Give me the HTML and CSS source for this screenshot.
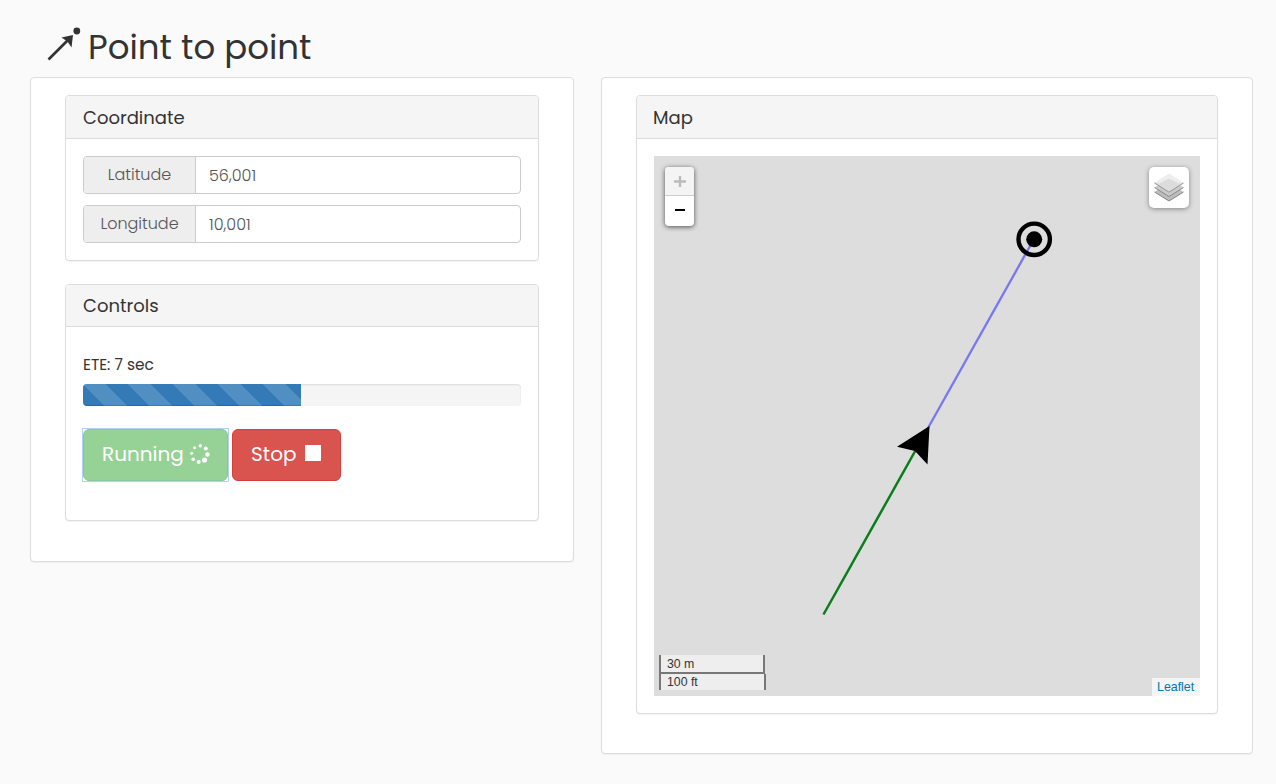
FILE: index.html
```html
<!DOCTYPE html>
<html lang="en">
<head>
<meta charset="utf-8">
<title>Point to point</title>
<link rel="stylesheet" href="styles.css">
</head>
<body>
<header class="page-title">
  <svg class="title-icon" width="36" height="36" viewBox="0 0 36 36"><path d="M2.500 33.500 24 12" stroke="#333" stroke-width="2.600"/><path d="M15.500 11.500 27 9 25.500 21.500 21.500 15.500Z" fill="#333"/><circle cx="30.800" cy="5" r="3.400" fill="#333"/></svg>
  <h1>Point to point</h1>
</header>
<main class="columns">
  <section class="panel outer outer-left">
    <div class="panel coordinate">
      <h2 class="heading">Coordinate</h2>
      <div class="fields">
        <label class="field"><span class="addon">Latitude</span><span class="value">56,001</span></label>
        <label class="field"><span class="addon">Longitude</span><span class="value">10,001</span></label>
      </div>
    </div>
    <div class="panel controls">
      <h2 class="heading">Controls</h2>
      <div class="controls-body">
        <p class="ete">ETE: 7 sec</p>
        <div class="progress"><div class="bar"></div></div>
        <div class="buttons">
          <div class="focus-ring"><button class="btn running"><span>Running</span>
            <svg width="20" height="20" viewBox="0 0 20 20" fill="#fff"><circle cx="10.300" cy="1.800" r="1.700"/><circle cx="15.800" cy="4.500" r="2"/><circle cx="17.500" cy="10.500" r="2.200"/><circle cx="14.500" cy="16" r="2.600"/><circle cx="8.700" cy="17.900" r="2"/><circle cx="3.200" cy="15.300" r="1.800"/><circle cx="1.700" cy="9.300" r="1.600"/><circle cx="4.600" cy="3.700" r="1.500"/></svg>
          </button></div>
          <button class="btn stop"><span>Stop</span><i class="square"></i></button>
        </div>
      </div>
    </div>
  </section>
  <section class="panel outer outer-right">
    <div class="panel map-panel">
      <h2 class="heading">Map</h2>
      <div class="map">
        <svg class="route" width="546" height="540" viewBox="0 0 546 540">
          <path d="M169.500 458.500 264 290" stroke="#0a7d1c" stroke-width="2.500"/>
          <path d="M274 272 380 83" stroke="#7777f2" stroke-width="2.300"/>
          <path d="M275.500 270 243 290.700 261 295 273.500 308.500Z"/>
          <circle cx="380.200" cy="83.300" r="15.700" fill="none" stroke="#000" stroke-width="4.400"/>
          <circle cx="380.200" cy="83.300" r="8"/>
        </svg>
        <div class="zoom">
          <span class="zoom-in"><svg width="12" height="12"><path d="M0 6.500H12M6 1V12" stroke="#bbb" stroke-width="2.400"/></svg></span>
          <span><svg width="12" height="12"><path d="M1 5H11" stroke="#000" stroke-width="2"/></svg></span>
        </div>
        <div class="layers">
          <svg width="30" height="30" viewBox="0 0 30 30"><path d="M.5 19 15 10 29.500 19 15 28Z" fill="#bcbcbc"/><path d="M.5 19 15 28 29.500 19" fill="none" stroke="#858585"/><path d="M.5 14.500 15 5.500 29.500 14.500 15 23.500Z" fill="#cacaca"/><path d="M.5 14.500 15 23.500 29.500 14.500" fill="none" stroke="#8b8b8b"/><path d="M.5 10 15 .8 29.500 10 15 19.200Z" fill="#dcdcdc"/><path d="M.5 10 15 .8 29.500 10 25 10.500 15 5.500 5 10.500Z" fill="#eee"/><path d="M.5 10 15 19.200 29.500 10" fill="none" stroke="#949494"/></svg>
        </div>
        <div class="scale"><span class="metric">30 m</span><span class="imperial">100 ft</span></div>
        <div class="attribution">Leaflet</div>
      </div>
    </div>
  </section>
</main>
</body>
</html>
```
FILE: styles.css
```css
* { box-sizing: border-box; }
body { margin: 0; height: 784px; overflow: hidden; background: #fafafa; color: #333; font-family: Poppins, Inter, sans-serif; }
h1, h2, p { margin: 0; font-weight: 400; }
span { white-space: nowrap; }
svg { display: block; }
.page-title { height: 77px; padding: 26px 0 0 46px; display: flex; }
.page-title h1 { margin-left: 6px; font-size: 34px; line-height: 42px; }
.columns { display: flex; align-items: flex-start; gap: 27px; padding-left: 30px; }
.panel { background: #fff; border: 1px solid #ddd; border-radius: 4px; box-shadow: 0 1px 1px rgba(0,0,0,.05); }
.outer { padding: 17px 34px 0; }
.outer-left { width: 544px; height: 485px; }
.outer-right { width: 652px; height: 677px; }
.heading { height: 43px; padding-left: 17px; line-height: 43px; font-size: 18px; background: #f5f5f5; border-bottom: 1px solid #ddd; border-radius: 3px 3px 0 0; }
.coordinate { height: 166px; margin-bottom: 23px; }
.fields { padding: 17px; display: grid; gap: 11px; }
.field { height: 38px; display: flex; border: 1px solid #ccc; border-radius: 4px; font-size: 16px; line-height: 36px; color: #555; font-weight: 300; }
.addon { width: 112px; text-align: center; background: #eee; border-right: 1px solid #ccc; border-radius: 3px 0 0 3px; }
.value { padding-left: 13px; padding-top: 1px; }
.controls { height: 237px; }
.controls .heading { height: 42px; line-height: 42px; }
.controls-body { padding: 27px 17px 0; }
.ete { height: 30px; font-size: 15.400px; line-height: 22px; }
.progress { height: 22px; background: #f5f5f5; border-radius: 4px; overflow: hidden; box-shadow: inset 0 1px 2px rgba(0,0,0,.1); }
.bar { width: 218px; height: 22px; background: linear-gradient(45deg, rgba(255,255,255,.15) 25%, transparent 25%, transparent 50%, rgba(255,255,255,.15) 50%, rgba(255,255,255,.15) 75%, transparent 75%) 0 0 / 45px 45px #337ab7; box-shadow: inset 0 -1px 0 rgba(0,0,0,.15); }
.buttons { margin: 22px 0 0 -1px; display: flex; align-items: center; gap: 3px; }
.focus-ring { border: 1px solid #b3d1fb; }
.btn { height: 52px; display: flex; align-items: center; padding: 0 0 2px 18px; border: 1px solid; border-radius: 6px; color: #fff; font: 400 20px/30px Poppins, Inter, sans-serif; }
.running { width: 145px; background: #96d296; border-color: #88c79b; outline: none; gap: 6px; }
.stop { width: 109px; background: #d9534f; border-color: #d43f3a; gap: 8px; }
.stop span { letter-spacing: .1px; }
.square { width: 16px; height: 16px; margin: -2px 0 0; background: #fff; }
.map-panel { height: 619px; }
.map-panel .heading { padding-left: 16px; }
.map { position: relative; width: 546px; height: 540px; margin: 17px 0 0 17px; background: #ddd; font-family: "Liberation Sans", sans-serif; }
.zoom { position: absolute; left: 11px; top: 11px; width: 29px; height: 59px; background: #fff; border-radius: 4px; box-shadow: 0 1px 5px rgba(0,0,0,.65); overflow: hidden; }
.zoom span { height: 30px; display: flex; align-items: center; justify-content: center; }
.zoom .zoom-in { height: 29px; background: #f4f4f4; border-bottom: 1px solid #ccc; }
.layers { position: absolute; left: 495px; top: 11px; width: 40px; height: 41px; padding: 6px 5px; background: #fff; border-radius: 5px; box-shadow: 0 1px 5px rgba(0,0,0,.4); }
.scale { position: absolute; left: 5px; bottom: 6px; font-size: 12.300px; color: #333; }
.scale span { display: block; padding-left: 6px; line-height: 18px; background: #eee; border: 2px solid #777; border-top: 0; }
.scale .metric { width: 106px; height: 19px; }
.scale .imperial { width: 107px; height: 16px; line-height: 17px; border-bottom: 0; }
.attribution { position: absolute; right: 0; bottom: 0; width: 48px; height: 18px; padding-left: 5px; background: #f5f5f5; color: #0078a8; font-size: 12.400px; line-height: 18px; }
```
